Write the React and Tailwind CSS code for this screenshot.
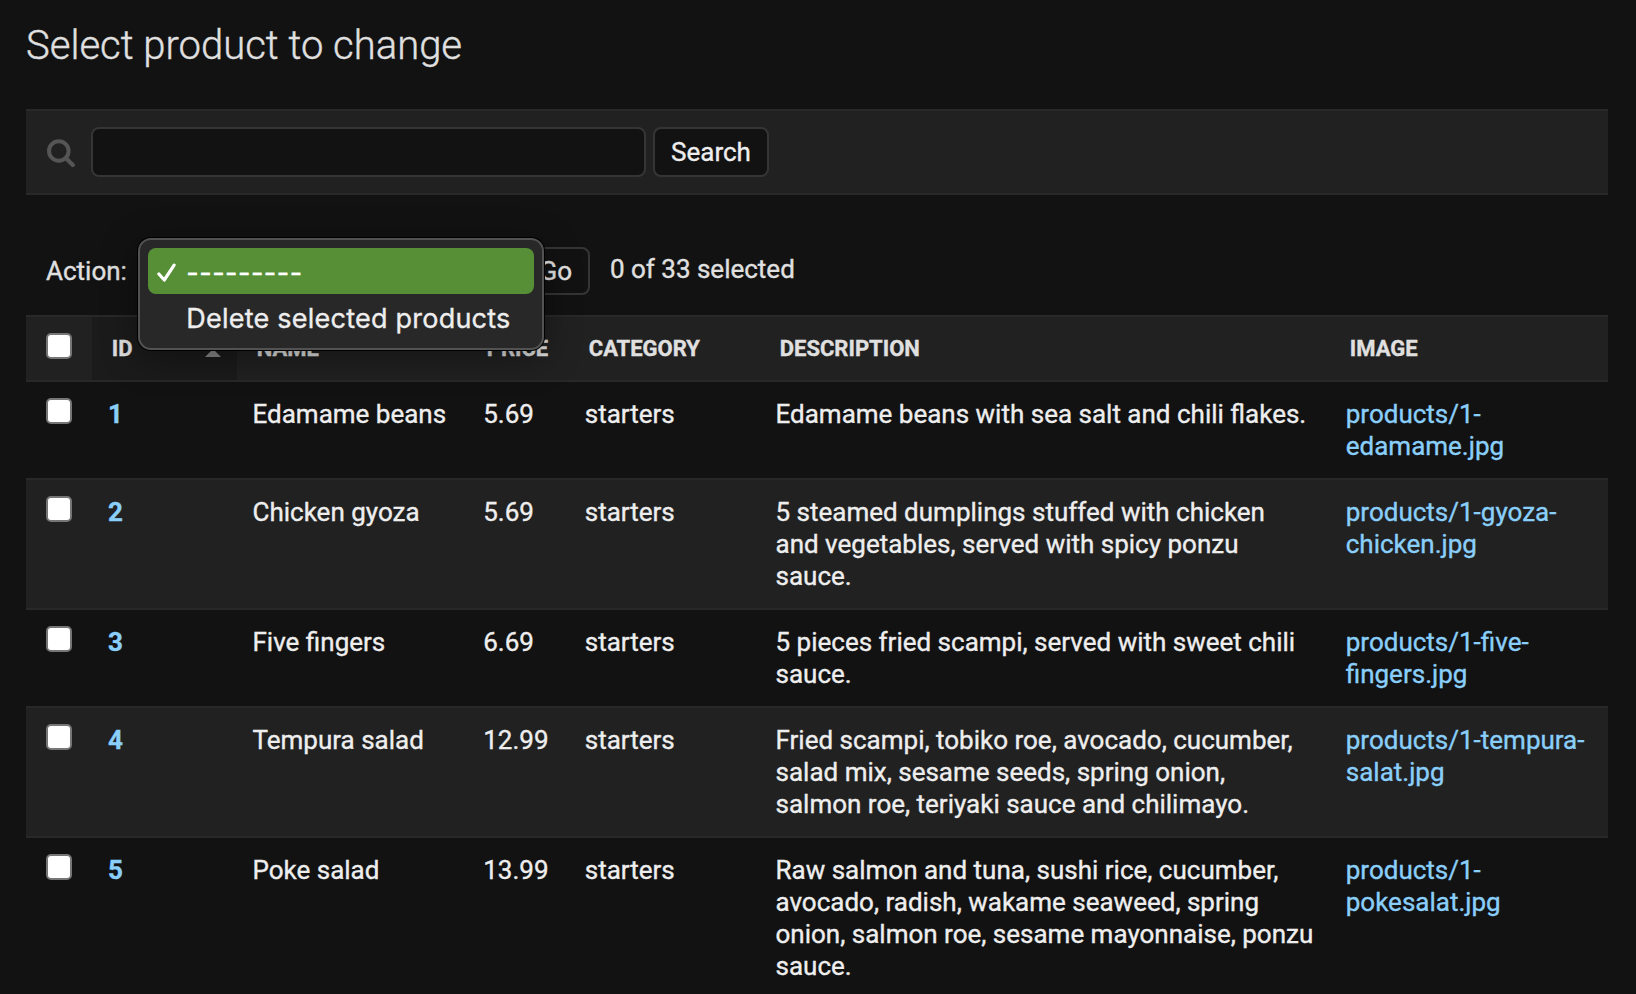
import React from "react";

const products = [
  { id: 1, name: "Edamame beans", price: "5.69", category: "starters", description: "Edamame beans with sea salt and chili flakes.", image: ["products/1-", "edamame.jpg"] },
  { id: 2, name: "Chicken gyoza", price: "5.69", category: "starters", description: "5 steamed dumplings stuffed with chicken and vegetables, served with spicy ponzu sauce.", image: ["products/1-gyoza-", "chicken.jpg"] },
  { id: 3, name: "Five fingers", price: "6.69", category: "starters", description: "5 pieces fried scampi, served with sweet chili sauce.", image: ["products/1-five-", "fingers.jpg"] },
  { id: 4, name: "Tempura salad", price: "12.99", category: "starters", description: "Fried scampi, tobiko roe, avocado, cucumber, salad mix, sesame seeds, spring onion, salmon roe, teriyaki sauce and chilimayo.", image: ["products/1-tempura-", "salat.jpg"] },
  { id: 5, name: "Poke salad", price: "13.99", category: "starters", description: "Raw salmon and tuna, sushi rice, cucumber, avocado, radish, wakame seaweed, spring onion, salmon roe, sesame mayonnaise, ponzu sauce.", image: ["products/1-", "pokesalat.jpg"] },
];

function Checkbox() {
  return <span role="checkbox" aria-checked="false" className="block size-[26px] rounded-[5px] border-2 border-[#767676] bg-white" />;
}

function HeaderCell({ children }) {
  return <th className="pl-[19.75px] text-left align-middle font-bold">{children}</th>;
}

function SearchBar() {
  return (
    <form className="flex h-[86px] items-center border-y-2 border-[#282828] bg-[#212121] pl-5">
      <svg className="h-[30px] w-[30px] text-[#555555]" viewBox="0 -1 30 30" fill="none" stroke="currentColor">
        <circle cx="12.8" cy="13" r="9.8" strokeWidth="4" />
        <path d="M20 20.2 L26.8 27" strokeWidth="4.2" strokeLinecap="round" />
      </svg>
      <div className="ml-[15px] h-[50px] w-[555px] rounded-lg border-2 border-[#353535] bg-[#121212]" />
      <button type="button" className="ml-[7px] h-[50px] w-[116px] rounded-lg border-2 border-[#353535] bg-[#121212] text-[#eeeeee]">Search</button>
    </form>
  );
}

function ActionMenu() {
  return (
    <ul className="absolute left-[112px] top-[43px] z-10 h-[112px] w-[406px] rounded-[13px] border-2 border-[#525252] bg-[#282828] px-[8px] pt-[8px] font-['Inter',sans-serif] text-[27px] tracking-[0.23px] shadow-[0_0_0_1px_#000000,0_8px_36px_rgba(0,0,0,0.4)]">
      <li className="flex h-[46px] items-center rounded-lg bg-[#568f36] pt-[3px] text-white">
        <svg className="ml-2 h-[20px] w-[21px]" viewBox="-0.5 0 21 20" fill="none" stroke="currentColor" strokeWidth="3.2" strokeLinecap="round" strokeLinejoin="round">
          <path d="M2.4 11 L7.8 17 L17.6 2.2" />
        </svg>
        <span className="ml-[9.3px] tracking-[0.5px]">---------</span>
      </li>
      <li className="flex h-[46px] items-center pl-[38.3px] pt-[3px] text-[#eeeeee]">
        <span className="whitespace-nowrap">Delete selected products</span>
      </li>
    </ul>
  );
}

function Actions() {
  return (
    <div className="relative flex h-[120px] items-start pl-5 pt-[52px] text-[#e0e0e0]">
      <span className="pt-[8px]">Action:</span>
      <ActionMenu />
      <button type="button" className="ml-[395px] mt-0 h-[48px] w-[68px] rounded-lg border-2 border-[#353535] bg-[#121212] text-[#e4e4e4]">Go</button>
      <span className="ml-[20px] pt-[6px]">0 of 33 selected</span>
    </div>
  );
}

function ProductTable() {
  return (
    <table className="w-full table-fixed border-separate border-spacing-0">
      <colgroup>
        <col className="w-[66px]" />
        <col className="w-[145px]" />
        <col className="w-[230px]" />
        <col className="w-[102px]" />
        <col className="w-[191px]" />
        <col className="w-[570px]" />
        <col />
      </colgroup>
      <thead>
        <tr className="h-[67px] bg-[#212121] text-[22px] text-[#e0e0e0] [&>th]:border-y-2 [&>th]:border-[#282828]">
          <th className="pl-5 pb-[5px] text-left align-middle"><Checkbox /></th>
          <th className="bg-[#1b1b1b] pl-[19.75px] pr-4 text-left align-middle font-bold">
            <div className="flex items-center justify-between">
              ID
              <svg className="mt-[9px] h-[8px] w-[16px] text-[#8a8a8a]" viewBox="0 0 16 8" fill="currentColor"><path d="M8 0 L16 8 H0 Z" /></svg>
            </div>
          </th>
          <HeaderCell>NAME</HeaderCell>
          <HeaderCell>PRICE</HeaderCell>
          <HeaderCell>CATEGORY</HeaderCell>
          <HeaderCell>DESCRIPTION</HeaderCell>
          <HeaderCell>IMAGE</HeaderCell>
        </tr>
      </thead>
      <tbody>
        {products.map((p) => (
          <tr key={p.id} className="text-[#eeeeee] even:bg-[#212121] [&>td]:border-b-2 [&>td]:border-[#282828] [&>td]:pr-4 [&>td]:py-4 [&>td]:align-top">
            <td className="pl-5"><Checkbox /></td>
            <td className="pl-4 font-bold text-[#8acffa]">{p.id}</td>
            <td className="pl-[15.5px]">{p.name}</td>
            <td className="pl-[16.25px]">{p.price}</td>
            <td className="pl-[15.75px]">{p.category}</td>
            <td className="pl-[15.5px]">{p.description}</td>
            <td className="pl-[15.75px] text-[#8acffa]">{p.image[0]}<br />{p.image[1]}</td>
          </tr>
        ))}
      </tbody>
    </table>
  );
}

export default function App() {
  return (
    <main className="h-[994px] w-[1636px] overflow-hidden bg-[#121212] pl-[26px] pr-7 pt-[22px] font-['Roboto',sans-serif] text-[26px] leading-[32px] [-webkit-text-stroke:0.35px]">
      <h1 className="mb-[39px] h-[48px] text-[40px] font-light leading-[48px] text-[#e0e0e0]">Select product to change</h1>
      <SearchBar />
      <Actions />
      <ProductTable />
    </main>
  );
}
